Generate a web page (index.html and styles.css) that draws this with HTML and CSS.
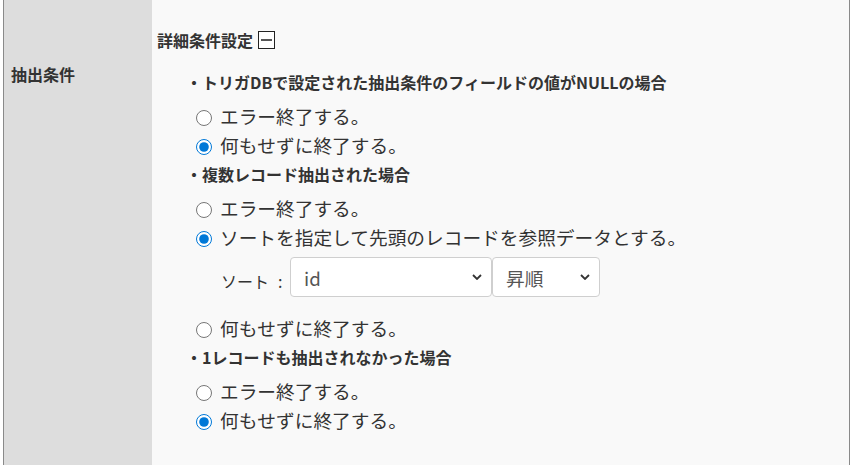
FILE: index.html
```html
<!DOCTYPE html>
<html lang="ja">
<head>
  <meta charset="UTF-8">
  <title>抽出条件</title>
  <link rel="stylesheet" href="styles.css">
</head>
<body>

  <div class="frame">
    <div class="label-cell">抽出条件</div>

    <div class="value-cell">
      <div class="detail-head">詳細条件設定<span class="toggle"><span class="bar"></span></span></div>

      <!-- NULLの場合 -->
      <div class="group first">
        <div class="group-title">・トリガDBで設定された抽出条件のフィールドの値がNULLの場合</div>
        <label class="opt"><input type="radio" name="nullCase">エラー終了する。</label>
        <label class="opt"><input type="radio" name="nullCase" checked>何もせずに終了する。</label>
      </div>

      <!-- 複数レコード -->
      <div class="group">
        <div class="group-title">・複数レコード抽出された場合</div>
        <label class="opt"><input type="radio" name="multiCase">エラー終了する。</label>
        <label class="opt"><input type="radio" name="multiCase" checked>ソートを指定して先頭のレコードを参照データとする。</label>
        <div class="sort-row">
          <span class="sort-label">ソート<span class="colon">:</span></span>
          <span class="select-wrap wide">
            <select>
              <option>id</option>
            </select>
            <svg class="chev" width="10" height="6" viewBox="0 0 10 6"><path d="M1 1 L5 5 L9 1" fill="none" stroke="#333" stroke-width="1.8"/></svg>
          </span>
          <span class="select-wrap narrow">
            <select>
              <option>昇順</option>
              <option>降順</option>
            </select>
            <svg class="chev" width="10" height="6" viewBox="0 0 10 6"><path d="M1 1 L5 5 L9 1" fill="none" stroke="#333" stroke-width="1.8"/></svg>
          </span>
        </div>
        <label class="opt"><input type="radio" name="multiCase">何もせずに終了する。</label>
      </div>

      <!-- 0件 -->
      <div class="group">
        <div class="group-title">・1レコードも抽出されなかった場合</div>
        <label class="opt"><input type="radio" name="noneCase">エラー終了する。</label>
        <label class="opt"><input type="radio" name="noneCase" checked>何もせずに終了する。</label>
      </div>
    </div>
  </div>

</body>
</html>
```

FILE: styles.css
```css
body {
  margin: 0;
  font-family: "Noto Sans CJK JP", "Noto Sans", sans-serif;
  color: #333;
  background: #fff;
}
.frame {
  display: flex;
  margin-left: 3px;
  width: 845px;
  height: 465px;
  border-left: 1px solid #8a8a8a;
  border-right: 1px solid #8a8a8a;
}
.label-cell {
  width: 141px;
  background-color: #dddddd;
  padding: 63px 0 0 7px;
  font-size: 16px;
  font-weight: bold;
  line-height: 22px;
}
.value-cell {
  flex: 1;
  background-color: #f9f9f9;
  padding: 29px 0 0 5px;
}
.detail-head {
  display: flex;
  align-items: center;
  font-size: 16px;
  font-weight: bold;
  line-height: 22px;
}
.toggle {
  display: flex;
  align-items: center;
  justify-content: center;
  width: 15px;
  height: 16px;
  margin-left: 5px;
  border: 1.5px solid #222;
  background: #fff;
}
.toggle .bar {
  width: 11px;
  height: 2px;
  background: #555;
}
.group {
  padding-left: 29px;
  margin-top: 4px;
}
.group.first {
  margin-top: 20px;
}
.group-title {
  font-size: 16px;
  font-weight: bold;
  line-height: 22px;
  margin-bottom: 8px;
}
.opt {
  display: flex;
  align-items: center;
  height: 29px;
  padding-left: 10px;
  font-size: 18.7px;
  cursor: pointer;
}
.opt input {
  width: 16px;
  height: 16px;
  margin: 5px 8px 0 0;
  accent-color: #0078d7;
}
.sort-row {
  display: flex;
  align-items: center;
  margin: 6px 0 16px 35px;
}
.sort-label {
  font-size: 16px;
  width: 69px;
  padding-top: 8px;
}
.sort-label .colon {
  margin-left: 9px;
}
.select-wrap {
  position: relative;
  display: inline-block;
}
.select-wrap select {
  -webkit-appearance: none;
  appearance: none;
  height: 40px;
  border: 1px solid #cfcfcf;
  border-radius: 4px;
  background: #fff;
  color: #555;
  font-family: inherit;
  font-size: 18.7px;
  padding: 0 0 0 13px;
}
.select-wrap.wide select {
  width: 202px;
}
.select-wrap.narrow select {
  width: 108px;
}
.chev {
  position: absolute;
  right: 10px;
  top: 17px;
  pointer-events: none;
}
```
